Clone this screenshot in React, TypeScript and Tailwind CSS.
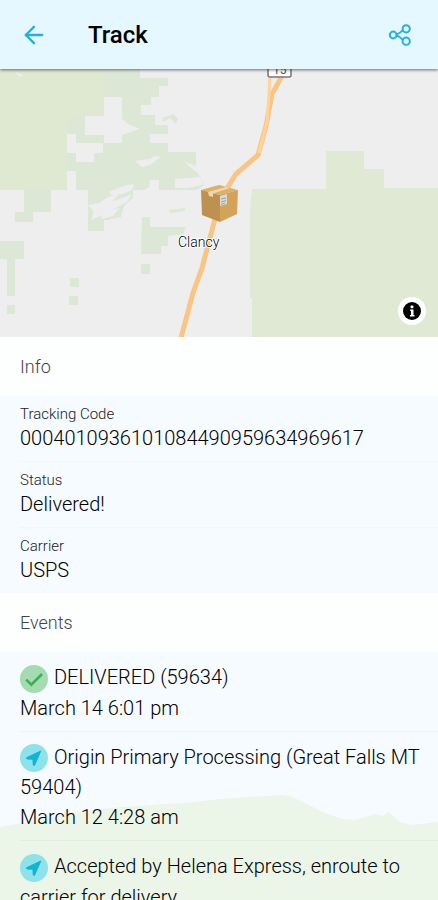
import { ArrowLeft } from "lucide-react"

const details = [
    { label: "Tracking Code", value: "0004010936101084490959634969617" },
    { label: "Status", value: "Delivered!" },
    { label: "Carrier", value: "USPS" },
]

const events = [
    { title: "DELIVERED (59634)", time: "March 14 6:01 pm", done: true },
    { title: "Origin Primary Processing (Great Falls MT 59404)", time: "March 12 4:28 am", done: false },
    { title: "Accepted by Helena Express, enroute to carrier for delivery", time: "March 11 5:12 pm", done: false },
]

function ShareIcon() {
    return (
        <svg width="24" height="24" viewBox="0 0 24 24" fill="none" stroke="currentColor" strokeWidth="2" aria-hidden="true">
            <circle cx="5.2" cy="12" r="3.4" />
            <circle cx="18.2" cy="5.8" r="3.6" />
            <circle cx="18.2" cy="18.2" r="3.6" />
            <path d="M8.4 11.2 C11.5 11 12.5 9 14.8 7.4 M8.4 12.8 C11.5 13 12.5 15 14.8 16.6" />
        </svg>
    )
}

function EventIcon({ done }: { done: boolean }) {
    if (done) {
        return (
            <svg className="mr-1.5 inline-block align-middle" width="28" height="28" viewBox="0 0 28 28" aria-hidden="true">
                <circle cx="14" cy="14" r="14" fill="#a5dbb0" />
                <path d="M6.2 14.6 L11.4 19.6 L22 9" fill="none" stroke="#3caf50" strokeWidth="2.6" />
            </svg>
        )
    }
    return (
        <svg className="mr-1.5 inline-block align-middle" width="28" height="28" viewBox="0 0 28 28" aria-hidden="true">
            <circle cx="14" cy="14" r="14" fill="#8ee2ea" />
            <path d="M20.8 7 L6.4 13.8 L7 15 L13 15.2 L13.2 21 L14.5 21.4 Z" fill="#10b5d2" stroke="#10b5d2" strokeLinejoin="round" />
        </svg>
    )
}

function PackageIcon() {
    return (
        <g>
            <path d="M201 190 L219 185 L238 190 L220 195 Z" fill="#dbb06a" />
            <path d="M201 190 L220 195 L220 222 L202 215 Z" fill="#bd9150" />
            <path d="M220 195 L238 190 L237 214 L220 222 Z" fill="#d3a458" />
            <path d="M208 192 L226 187 L230 188 L213 193.4 L213 197 L209 196 Z" fill="#efd8ab" />
            <path d="M220 196 L227 194 L227 204 L220 206 Z" fill="#d8dad6" />
            <path d="M221 199 L226 198 M221 202 L226 200.5 M221 204.5 L225 203" stroke="#93a5b2" strokeWidth="1" />
        </g>
    )
}

function TrackMap() {
    return (
        <svg className="block w-full" viewBox="0 69 438 268" role="img" aria-label="Map of Clancy">
            <rect y="69" width="438" height="268" fill="#eeeeee" />

            {/* Forest patches */}
            <path d="M0 69 H140 V78 H168 V86 H159 V97 H151 V105 H141 V115 H155 V125 H168 V134 H150 V143 H168 V152 H196 V169 L204 185 L196 191 L190 196 H133 L120 205 L110 206 V220 L105 231 H88 V190 H76 V171 H67 V190 H51 V212 H33 V222 H15 V212 H24 V190 H0 Z" fill="#dce8d5" />
            <path d="M0 69 H104 V116 H67 V190 H0 Z" fill="#dfe8d1" />
            <path d="M104 97 H122 V119 L128 124 L140 129 L122 135 V143 H104 V135 H85 V116 H104 Z" fill="#eeeeee" />
            <path d="M67 134 H76 V143 H103 V153 H94 V162 H76 V153 H67 Z" fill="#eeeeee" />
            <path d="M135 161 L150 159 L154 156 L161 157 L150 165 L142 167 Z M184 161 L200 168 L199 174 L190 167 Z M109 192 L124 186 L134 184 L132 190 L118 196 L111 195 Z M150 180 H159 V193 H139 L149 187 Z M175 179 L200 177 L203 185 L187 188 H175 Z M15 72 L24 75 L20 77 Z" fill="#eeeeee" />
            <path d="M133 190 H204 V198 H133 Z" fill="#eeeeee" />
            <path d="M162 118 L174 114 L178 119 L176 124 L170 118 L163 122 Z" fill="#dce8d5" />
            {/* Broken-up woodland south of the main patch */}
            <path d="M110 196 L133 192 V198 L124 206 L121 217 L106 220 L103 212 L110 206 Z" fill="#dce8d5" />
            <path d="M88 205 L99 203 L108 197 L119 194 L112 202 L132 194 L127 202 L117 207 L98 217 L91 220 L94 212 Z M103 212 L120 208 L113 216 L101 219 Z M104 220 H111 V231 H104 Z" fill="#eeeeee" />
            <path d="M142 217 H150 V227 H186 L183 234 L168 236 V246 H161 V254 H141 Z M141 264 H150 V274 H141 Z M70 278 H79 V287 H70 Z M69 296 H78 V305 H69 Z M0 241 H24 V259 H15 V296 H7 V259 H0 Z M7 305 H15 V314 H7 Z M169 210 L185 208 V211 L170 213 Z" fill="#dce8d5" />
            <path d="M252 189 H326 V151 H364 V169 H384 V188 H438 V337 H252 V298 H250 V208 Z" fill="#dfe9d4" />

            {/* Highway */}
            <path d="M282 76 L272 94 L266 126 L258 155 L236 174 L220 200 L202 268 L193 293 L181 338" fill="none" stroke="#f9c583" strokeWidth="5" />
            <path d="M270 76 L269 94 L267 122 L259 153" fill="none" stroke="#ffd399" strokeWidth="3" />
            <rect x="268" y="62" width="23" height="15" rx="2" fill="#fff" stroke="#777" strokeWidth="1.5" />
            <text x="273" y="74" fontSize="12" fill="#555">15</text>

            <text x="178" y="247" fontSize="14" fontWeight="300" fill="#000" stroke="#fff" strokeWidth="2" paintOrder="stroke">Clancy</text>
            <PackageIcon />
        </svg>
    )
}

export default function App() {
    return (
        <div className="relative h-screen overflow-hidden bg-[#f5fbff] font-['Roboto',sans-serif] text-black">
            <header className="relative z-10 flex items-center bg-[#e6f8ff] px-5 pt-[13px] pb-3 text-[#22b1da] shadow-[0_1px_3px_rgba(0,0,0,0.55)]">
                <button type="button" aria-label="Back" className="flex h-11 w-[68px] items-center">
                    <ArrowLeft size={28} strokeWidth={2} />
                </button>
                <h1 className="flex-1 text-2xl font-medium text-black">Track</h1>
                <button type="button" aria-label="Share" className="flex h-11 items-center px-1.5">
                    <ShareIcon />
                </button>
            </header>

            <div className="relative">
                <TrackMap />
                <button type="button" aria-label="Map information" className="absolute right-3 bottom-3 flex size-7 items-center justify-center rounded-full bg-white">
                    <svg width="18" height="18" viewBox="0 0 18 18" aria-hidden="true">
                        <circle cx="9" cy="9" r="9" fill="#000" />
                        <path d="M7.2 7.5 H10.5 V13 H11.5 V14.5 H7 V13 H8 V9 H7.2 Z" fill="#fff" />
                        <circle cx="9" cy="4.8" r="1.6" fill="#fff" />
                    </svg>
                </button>
            </div>

            <h2 className="bg-[#fdfefe] px-5 py-4 text-lg leading-[27px] font-light text-[#444]">Info</h2>
            <dl className="font-light">
                {details.map((item) => (
                    <div key={item.label} className="ml-5 border-b border-[#f0f6f9] py-2 last:border-0">
                        <dt className="text-[15px] leading-5 text-[#222]">{item.label}</dt>
                        <dd className="text-xl leading-[29px]">{item.value}</dd>
                    </div>
                ))}
            </dl>

            <h2 className="bg-[#fdfefe] px-5 py-4 text-lg leading-[27px] font-light text-[#444]">Events</h2>
            <div className="relative">
                <svg className="absolute inset-x-0 top-[142px] w-full" viewBox="0 794 438 130" aria-hidden="true">
                    <path d="M0 827 L30 822 L75 812 L110 808 L150 805 L185 803 L220 799 L280 795 L290 796 L303 802 L325 813 L342 819 L356 820 L375 814 L382 816 L389 812 L400 822 L412 825 L438 822 V924 H0 Z" fill="#ebf6e9" />
                </svg>
                <ul className="relative font-light">
                    {events.map((event) => (
                        <li key={event.title} className="ml-5 border-b border-black/3 pt-2.5 pr-4 pb-2 text-xl leading-[30px]">
                            <p>
                                <EventIcon done={event.done} />
                                {event.title}
                            </p>
                            <p>{event.time}</p>
                        </li>
                    ))}
                </ul>
            </div>
        </div>
    )
}
